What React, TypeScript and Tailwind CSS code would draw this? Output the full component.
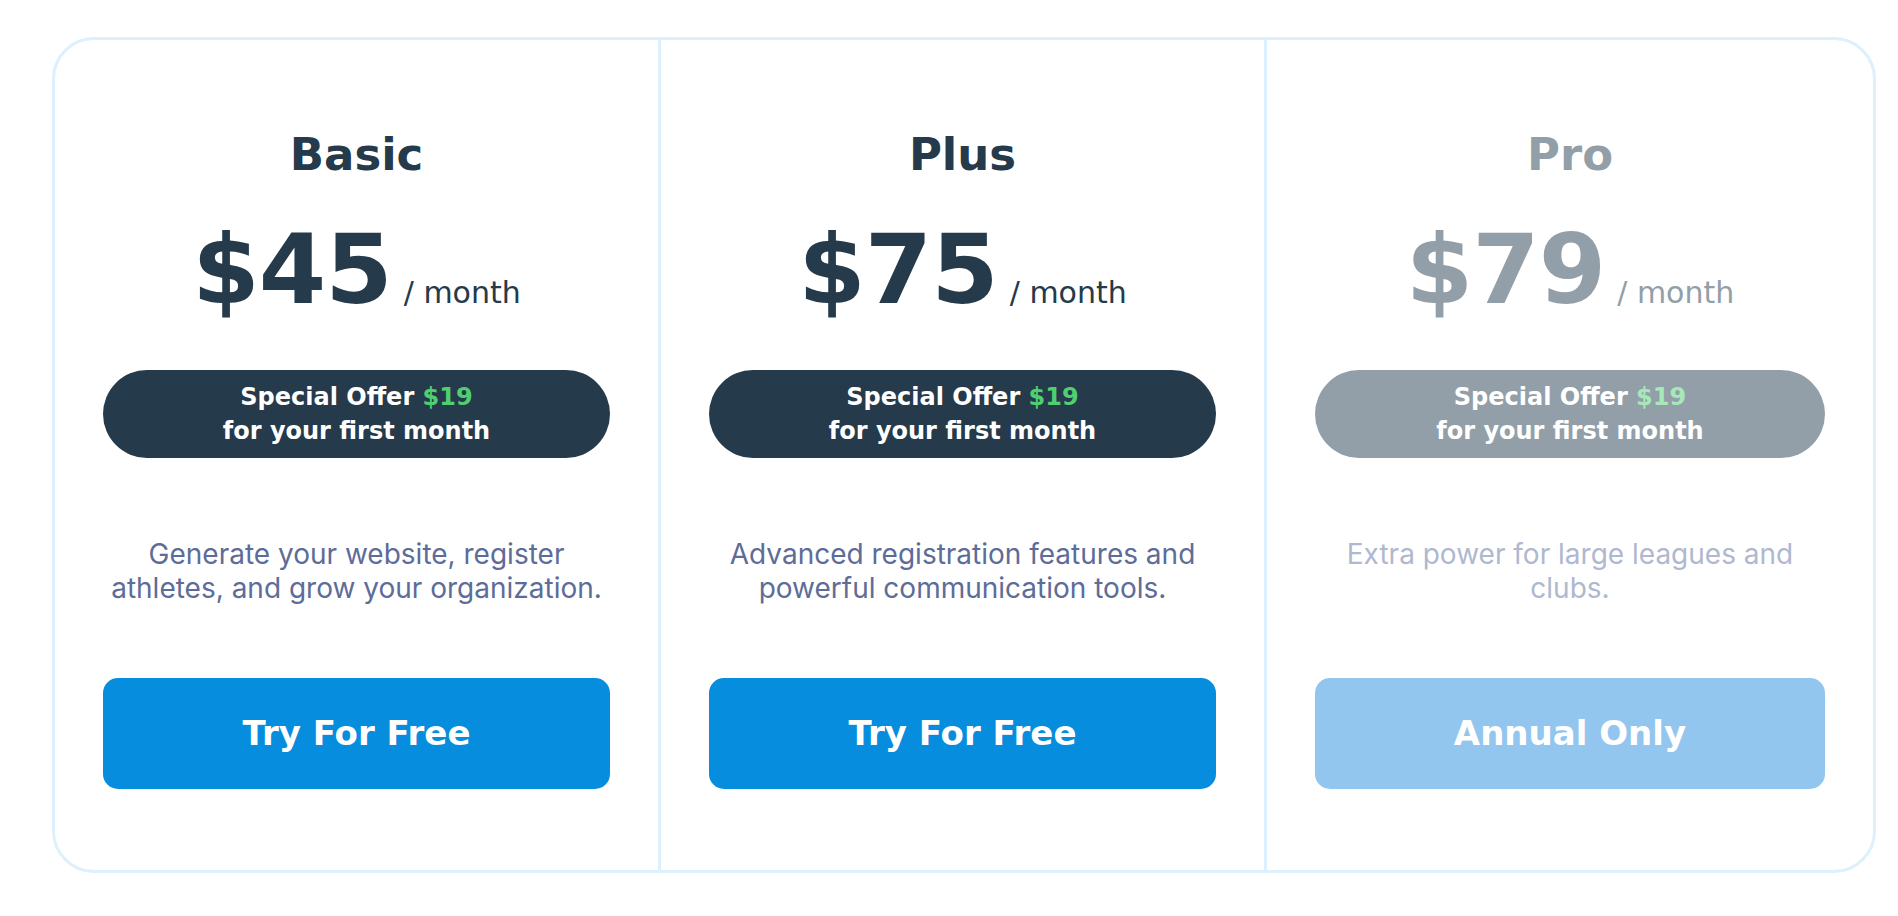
interface Plan {
  name: string;
  price: string;
  description: string;
  cta: string;
  muted: boolean;
}

const plans: Plan[] = [
  {
    name: "Basic",
    price: "$45",
    description: "Generate your website, register athletes, and grow your organization.",
    cta: "Try For Free",
    muted: false,
  },
  {
    name: "Plus",
    price: "$75",
    description: "Advanced registration features and powerful communication tools.",
    cta: "Try For Free",
    muted: false,
  },
  {
    name: "Pro",
    price: "$79",
    description: "Extra power for large leagues and clubs.",
    cta: "Annual Only",
    muted: true,
  },
];

const PlanColumn = ({ plan, divider }: { plan: Plan; divider: boolean }) => {
  const ink = plan.muted ? "text-[#939fa8]" : "text-[#253a4b]";
  return (
    <div
      className={`flex flex-col items-center px-12 pt-[92px] pb-[81px] ${
        divider ? "border-r-[3px] border-[#ddf0fd]" : ""
      }`}
    >
      <h2 className={`font-['DejaVu_Sans',sans-serif] text-[45px] leading-[45px] font-bold ${ink}`}>
        {plan.name}
      </h2>

      <div className={`mt-[45px] flex items-baseline font-['DejaVu_Sans',sans-serif] ${ink}`}>
        <span className="text-[97px] leading-[96px] font-bold tracking-[-1px]">{plan.price}</span>
        <span className="ml-3 text-[30px] leading-[30px]">/ month</span>
      </div>

      <div
        className={`mt-[52px] flex h-[88px] w-full flex-col items-center justify-center rounded-full font-['DejaVu_Sans',sans-serif] text-[24px] leading-[34px] font-bold text-white ${
          plan.muted ? "bg-[#939fa8]" : "bg-[#253a4b]"
        }`}
      >
        <span>
          Special Offer{" "}
          <span className={plan.muted ? "text-[#a6e8b8]" : "text-[#4fd070]"}>$19</span>
        </span>
        <span>for your first month</span>
      </div>

      <p
        className={`mt-[79px] text-center font-['Inter',sans-serif] text-[28px] leading-[34px] ${
          plan.muted ? "text-[#b0b8cf]" : "text-[#5d6c98]"
        }`}
      >
        {plan.description}
      </p>

      <button
        className={`mt-[73px] h-[111px] w-full rounded-[15px] font-['DejaVu_Sans',sans-serif] text-[34px] font-bold text-white ${
          plan.muted ? "bg-[#93c6ee]" : "bg-[#078ddd]"
        }`}
      >
        {plan.cta}
      </button>
    </div>
  );
};

export default function App() {
  return (
    <div className="min-h-screen bg-white pl-[52px] pt-[37px]">
      <div className="grid w-[1824px] grid-cols-3 overflow-hidden rounded-[42px] border-[3px] border-[#ddf0fd] bg-white">
        {plans.map((plan, index) => (
          <PlanColumn key={plan.name} plan={plan} divider={index < plans.length - 1} />
        ))}
      </div>
    </div>
  );
}
